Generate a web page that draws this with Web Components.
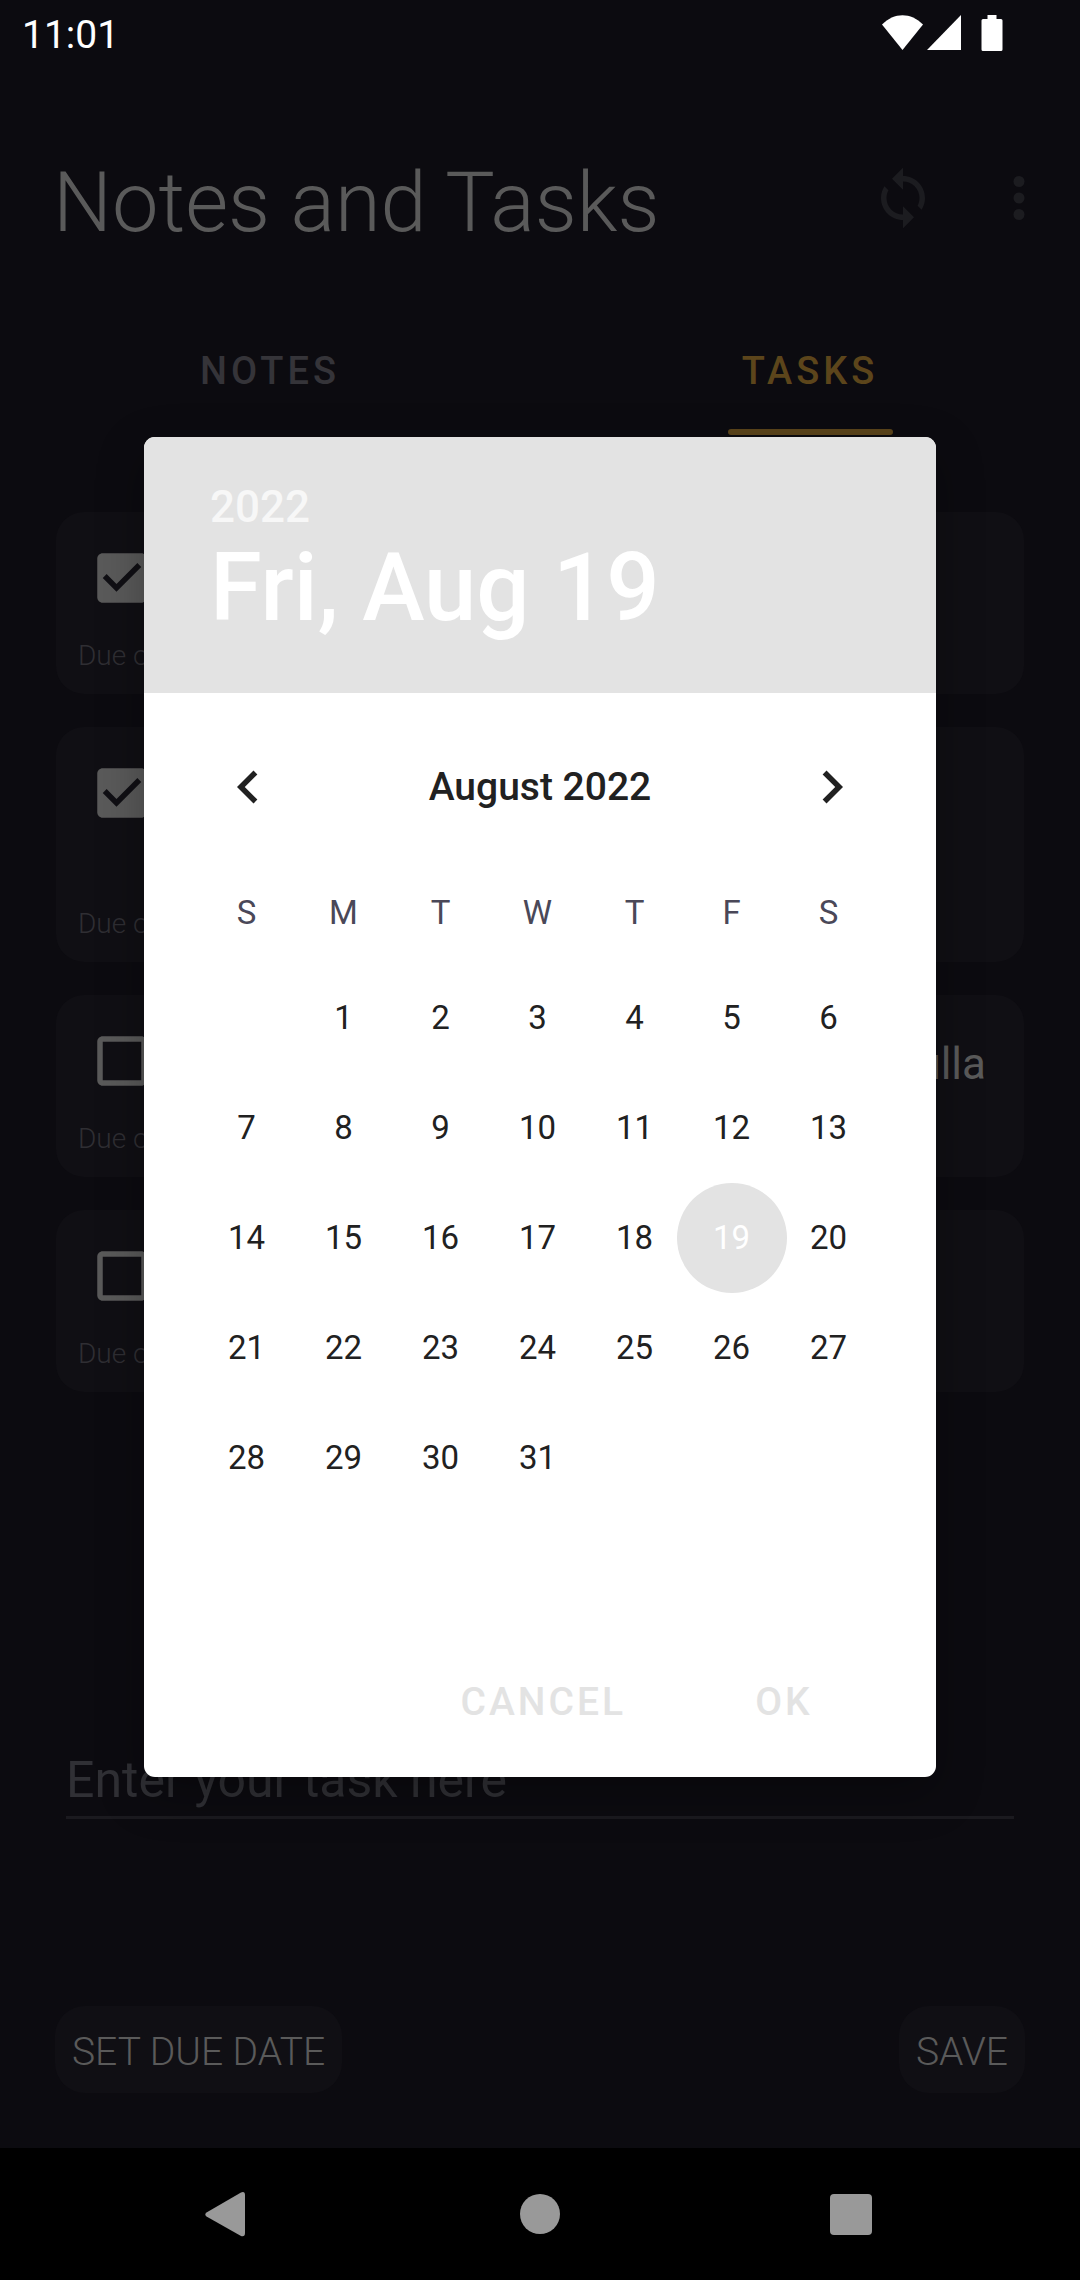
<!DOCTYPE html>
<html lang="en">
<head>
<meta charset="utf-8">
<meta name="viewport" content="width=device-width, initial-scale=1">
<title>Notes and Tasks</title>
<style>
  html, body { margin: 0; background: #0c0b10; }
  body { font-family: Roboto, "Noto Sans", sans-serif; color: #5a5a5a; }
</style>
</head>
<body>
<notes-app></notes-app>
<script>
const reset = `
  *, *::before, *::after { box-sizing: border-box; }
  button, input { font: inherit; color: inherit; background: none; border: 0; margin: 0; padding: 0; outline: 0; }
  svg { display: block; fill: currentColor; }
`;

class BaseElement extends HTMLElement {
  connectedCallback() {
    if (this.shadowRoot) return;
    this.attachShadow({ mode: 'open' }).innerHTML = `<style>${reset}</style>` + this.view();
  }
}

customElements.define('status-bar', class extends BaseElement {
  view() {
    return `<style>
      :host { display: flex; align-items: center; justify-content: space-between; height: 66px; padding: 0 77px 0 22px; color: #fff; }
      time { font-size: 39px; line-height: 46px; padding-top: 4px; }
      .icons { display: flex; align-items: center; gap: 4px; }
      .battery { margin-left: 16px; }
    </style>
    <time>11:01</time>
    <div class="icons">
      <svg width="41" height="36" viewBox="0 0 41 36"><path d="M0 9.5C12-3 29-3 41 9.5L20.500 35Z"/></svg>
      <svg width="34" height="36" viewBox="0 0 34 36"><path d="M34 0V35H0Z"/></svg>
      <svg class="battery" width="22" height="36" viewBox="0 0 22 36"><path d="M6.500 0h9v4H20a1.500 1.500 0 0 1 1.500 1.500v29A1.500 1.500 0 0 1 20 36H2a1.500 1.500 0 0 1-1.500-1.500v-29A1.500 1.500 0 0 1 2 4h4.500z"/></svg>
    </div>`;
  }
});

customElements.define('app-header', class extends BaseElement {
  view() {
    return `<style>
      :host { display: flex; justify-content: space-between; align-items: flex-start; padding: 88px 28px 0 53px; }
      h1 { margin: 0; font-size: 83px; line-height: 98px; font-weight: 300; }
      .actions { display: flex; gap: 50px; padding-top: 11px; color: #1c1c20; }
      button { width: 66px; height: 66px; }
    </style>
    <h1><slot></slot></h1>
    <div class="actions">
      <button aria-label="Sync"><svg width="66" height="66" viewBox="0 0 24 24"><path d="M12 4V1L8 5l4 4V6c3.310 0 6 2.690 6 6 0 1.010-.25 1.970-.7 2.800l1.460 1.460C19.540 15.030 20 13.570 20 12c0-4.420-3.580-8-8-8zm0 14c-3.310 0-6-2.690-6-6 0-1.010.25-1.970.7-2.800L5.240 7.740C4.460 8.970 4 10.430 4 12c0 4.420 3.580 8 8 8v3l4-4-4-4v3z"/></svg></button>
      <button aria-label="More options"><svg width="66" height="66" viewBox="0 0 24 24"><circle cx="12" cy="6" r="2"/><circle cx="12" cy="12" r="2"/><circle cx="12" cy="18" r="2"/></svg></button>
    </div>`;
  }
});

customElements.define('tab-item', class extends BaseElement {
  view() {
    const on = this.hasAttribute('selected');
    return `<style>
      :host { display: flex; flex: 1; justify-content: center; color: #353439; }
      :host([selected]) { color: #5c451b; }
      button { height: 132px; min-width: 165px; padding: 4px 12px 0; font-size: 38px; font-weight: 500; letter-spacing: 4px; display: grid; align-items: center; justify-content: center; position: relative; }
      :host([selected]) button::after { content: ""; position: absolute; left: 0; right: 0; bottom: 0; height: 6px; border-radius: 3px; background: currentColor; }
    </style>
    <button role="tab" aria-selected="${on}"><slot></slot></button>`;
  }
});

customElements.define('tab-bar', class extends BaseElement {
  view() {
    return `<style>:host { display: flex; margin-top: 51px; }</style><slot></slot>`;
  }
});

customElements.define('task-card', class extends BaseElement {
  view() {
    const on = this.hasAttribute('done');
    const d = on
      ? 'M19 3H5c-1.110 0-2 .9-2 2v14c0 1.100.89 2 2 2h14c1.110 0 2-.9 2-2V5c0-1.100-.89-2-2-2zm-9 14l-5-5 1.410-1.410L10 14.170l7.590-7.590L19 8l-9 9z'
      : 'M19 5v14H5V5h14m0-2H5c-1.100 0-2 .9-2 2v14c0 1.100.9 2 2 2h14c1.100 0 2-.9 2-2V5c0-1.100-.9-2-2-2z';
    return `<style>
      :host { display: block; background: #100f14; border-radius: 28px; padding: 0 38px 22px 22px; }
      label { display: flex; align-items: flex-start; }
      .box { display: grid; flex: none; width: 66px; height: 66px; margin: 33px 11px 0; }
      .box > * { grid-area: 1 / 1; }
      input { appearance: none; width: 66px; height: 66px; }
      .text { flex: 1; min-height: 53px; margin: 43px 0 31px; font-size: 44px; line-height: 53px; text-align: right; }
      :host([lines="2"]) .text { min-height: 106px; }
      .due { font-size: 28px; line-height: 33px; font-weight: 300; color: #2f2e33; }
    </style>
    <label>
      <span class="box"><svg width="66" height="66" viewBox="0 0 24 24" aria-hidden="true"><path d="${d}"/></svg><input type="checkbox" ${on ? 'checked' : ''} aria-label="Task done"></span>
      <span class="text"><slot></slot></span>
    </label>
    <div class="due">Due on</div>`;
  }
});

customElements.define('task-entry', class extends BaseElement {
  view() {
    return `<style>
      :host { display: block; padding: 0 55px 55px; }
      .field { display: block; margin: 0 11px; }
      input { display: block; width: 100%; height: 90px; padding: 14px 0 0; font-size: 50px; border-bottom: 3px solid #1b1a1f; }
      input::placeholder { color: #303035; opacity: 1; }
      .buttons { display: flex; justify-content: space-between; margin-top: 187px; }
      button { height: 87px; padding: 4px 17px 0; border-radius: 30px; background: #100f14; font-size: 39px; font-weight: 300; }
    </style>
    <label class="field"><input type="text" placeholder="Enter your task here" aria-label="Enter your task here"></label>
    <div class="buttons"><button>SET DUE DATE</button><button>SAVE</button></div>`;
  }
});

customElements.define('nav-bar', class extends BaseElement {
  view() {
    return `<style>
      :host { display: flex; justify-content: space-around; align-items: center; height: 132px; padding: 0 68px; background: #000; color: #999; }
      button { width: 66px; height: 66px; }
    </style>
    <button aria-label="Back"><svg width="66" height="66" viewBox="0 0 66 66"><path d="M14.500 31.500 49 11.500Q53 10 53 14V52Q53 56 49 55L14.500 35.500Q12 33.500 14.500 31.500Z"/></svg></button>
    <button aria-label="Home"><svg width="66" height="66" viewBox="0 0 66 66"><circle cx="33" cy="33" r="20"/></svg></button>
    <button aria-label="Recent apps"><svg width="66" height="66" viewBox="0 0 66 66"><rect x="8" y="13" width="42" height="41" rx="4"/></svg></button>`;
  }
});

customElements.define('date-picker', class extends BaseElement {
  view() {
    const first = 1, days = 31, selected = 19;
    let rows = '';
    for (let w = 0; w < 6; w++) {
      rows += '<tr>';
      for (let c = 0; c < 7; c++) {
        const n = w * 7 + c - first + 1;
        rows += n < 1 || n > days ? '<td></td>'
          : `<td><button${n === selected ? ' class="selected" aria-pressed="true"' : ''}>${n}</button></td>`;
      }
      rows += '</tr>';
    }
    return `<style>
      :host { display: block; width: 100%; background: #fff; color: #212121; border-radius: 11px; overflow: hidden; box-shadow: 0 16px 48px rgba(0, 0, 0, .3); }
      header { background: #e3e3e3; color: #fff; padding: 44px 66px 50px; }
      .year { display: block; font-size: 44px; line-height: 52px; font-weight: 500; color: #f7f7f7; }
      h2 { margin: 0; font-size: 94px; line-height: 110px; font-weight: 500; }
      .month { display: flex; justify-content: space-between; align-items: center; height: 171px; padding: 17px 71px 0; }
      .month h3 { margin: 0; font-size: 39px; line-height: 46px; font-weight: 500; }
      .month button { width: 66px; height: 66px; }
      table { display: block; padding: 0 59px 0 54px; font-size: 33px; }
      thead, tbody { display: block; }
      tr { display: flex; height: 110px; }
      thead tr { height: 99px; color: #4a4858; }
      th, td { flex: 1 1 0; min-width: 0; padding: 0; display: flex; justify-content: center; align-items: center; font-weight: 400; }
      th { padding-bottom: 2px; }
      td button { flex: none; width: 110px; height: 110px; padding-bottom: 2px; border-radius: 50%; }
      .selected { background: #e3e3e3; color: #fff; }
      footer { display: flex; justify-content: flex-end; align-items: center; gap: 48px; padding: 15px 64px 11px; height: 154px; color: #e3e3e3; }
      footer button { height: 128px; padding: 0 22px; font-size: 39px; font-weight: 500; letter-spacing: 3px; }
      footer button:last-child { min-width: 176px; }
    </style>
    <header><span class="year">2022</span><h2>Fri, Aug 19</h2></header>
    <div class="month">
      <button aria-label="Previous month"><svg width="66" height="66" viewBox="0 0 24 24"><path d="M15.410 7.410 14 6l-6 6 6 6 1.410-1.410L10.830 12z"/></svg></button>
      <h3>August 2022</h3>
      <button aria-label="Next month"><svg width="66" height="66" viewBox="0 0 24 24"><path d="M8.590 16.590 10 18l6-6-6-6-1.410 1.410L13.170 12z"/></svg></button>
    </div>
    <table>
      <thead><tr>${[...'SMTWTFS'].map(d => `<th scope="col">${d}</th>`).join('')}</tr></thead>
      <tbody>${rows}</tbody>
    </table>
    <footer><button>CANCEL</button><button>OK</button></footer>`;
  }
});

customElements.define('notes-app', class extends BaseElement {
  view() {
    return `<style>
      :host { display: flex; flex-direction: column; min-height: 100vh; position: relative; }
      .list { flex: 1; display: flex; flex-direction: column; gap: 33px; padding: 77px 56px 0; }
      .overlay { position: absolute; inset: 66px 0 132px; display: flex; align-items: center; padding: 0 144px; }
    </style>
    <status-bar></status-bar>
    <app-header>Notes and Tasks</app-header>
    <tab-bar role="tablist"><tab-item>NOTES</tab-item><tab-item selected>TASKS</tab-item></tab-bar>
    <section class="list">
      <task-card done></task-card>
      <task-card done lines="2"></task-card>
      <task-card>ulla</task-card>
      <task-card></task-card>
    </section>
    <task-entry></task-entry>
    <nav-bar></nav-bar>
    <div class="overlay"><date-picker role="dialog" aria-label="Choose due date"></date-picker></div>`;
  }
});
</script>
</body>
</html>
